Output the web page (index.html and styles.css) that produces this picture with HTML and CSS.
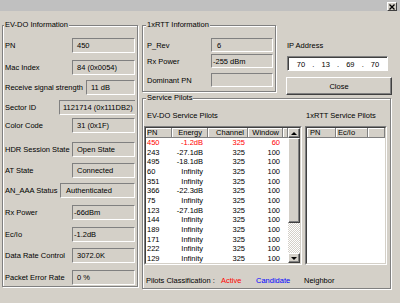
FILE: index.html
```html
<!DOCTYPE html>
<html>
  <head>
    <meta charset="UTF-8" />
    <meta name="viewport" content="width=device-width, initial-scale=1.0" />
    <link rel="stylesheet" href="styles.css">
  </head>
  <body>
    <div class="titlebar">
      <span class="close-x">
        <svg width="6" height="6" viewBox="0 0 6 6">
          <path d="M0.5 0.5L5.5 5.5M5.5 0.5L0.5 5.5" stroke="#000" stroke-width="1.3" />
        </svg>
      </span>
    </div>
    <div class="dialog">
      <div class="group evdo">
        <span class="group-title">EV-DO Information</span>
        <div class="rows">
          <div class="row"><span class="label">PN</span><span class="field">450</span></div>
          <div class="row"><span class="label">Mac Index</span><span class="field">84 (0x0054)</span></div>
          <div class="row"><span class="label">Receive signal strength</span><span class="field w-sig">11 dB</span></div>
          <div class="row"><span class="label">Sector ID</span><span class="field w-sector">1121714 (0x111DB2)</span></div>
          <div class="row"><span class="label">Color Code</span><span class="field">31 (0x1F)</span></div>
          <div class="row"><span class="label">HDR Session State</span><span class="field">Open State</span></div>
          <div class="row"><span class="label">AT State</span><span class="field">Connected</span></div>
          <div class="row"><span class="label">AN_AAA Status</span><span class="field w-aaa">Authenticated</span></div>
          <div class="row"><span class="label">Rx Power</span><span class="field tight">-66dBm</span></div>
          <div class="row"><span class="label">Ec/Io</span><span class="field tight">-1.2dB</span></div>
          <div class="row"><span class="label">Data Rate Control</span><span class="field">3072.0K</span></div>
          <div class="row"><span class="label">Packet Error Rate</span><span class="field">0 %</span></div>
        </div>
      </div>

      <div class="right-col">
        <div class="top-row">
          <div class="group rtt">
            <span class="group-title">1xRTT Information</span>
            <div class="rtt-rows">
              <div class="row short"><span class="label">P_Rev</span><span class="field w-rtt">6</span></div>
              <div class="row short"><span class="label">Rx Power</span><span class="field w-rtt tight">-255 dBm</span></div>
              <div class="row short"><span class="label">Dominant PN</span><span class="field w-rtt"></span></div>
            </div>
          </div>
          <div class="ip-box">
            <div class="ip-label">IP Address</div>
            <div class="ip-field">
              <span class="octet">70</span><span class="dot">.</span>
              <span class="octet">13</span><span class="dot">.</span>
              <span class="octet">69</span><span class="dot">.</span>
              <span class="octet">70</span>
            </div>
            <div class="close-btn">Close</div>
          </div>
        </div>

        <div class="group pilots">
          <span class="group-title">Service Pilots</span>
          <div class="pilot-cols">
            <div class="pilot-col evdo-col">
              <div class="col-label">EV-DO Service Pilots</div>
              <div class="list">
                <div class="list-inner">
                  <div class="lv">
                    <div class="lv-head">
                      <span class="c-pn">PN</span><span class="c-en">Energy</span><span class="c-ch">Channel</span><span class="c-win">Window</span><span class="c-fill"></span>
                    </div>
                    <div class="lv-row active"><span class="c-pn">450</span><span class="c-en">-1.2dB</span><span class="c-ch">325</span><span class="c-win">60</span></div>
                    <div class="lv-row"><span class="c-pn">243</span><span class="c-en">-27.1dB</span><span class="c-ch">325</span><span class="c-win">100</span></div>
                    <div class="lv-row"><span class="c-pn">495</span><span class="c-en">-18.1dB</span><span class="c-ch">325</span><span class="c-win">100</span></div>
                    <div class="lv-row"><span class="c-pn">60</span><span class="c-en">Infinity</span><span class="c-ch">325</span><span class="c-win">100</span></div>
                    <div class="lv-row"><span class="c-pn">351</span><span class="c-en">Infinity</span><span class="c-ch">325</span><span class="c-win">100</span></div>
                    <div class="lv-row"><span class="c-pn">366</span><span class="c-en">-22.3dB</span><span class="c-ch">325</span><span class="c-win">100</span></div>
                    <div class="lv-row"><span class="c-pn">75</span><span class="c-en">Infinity</span><span class="c-ch">325</span><span class="c-win">100</span></div>
                    <div class="lv-row"><span class="c-pn">123</span><span class="c-en">-27.1dB</span><span class="c-ch">325</span><span class="c-win">100</span></div>
                    <div class="lv-row"><span class="c-pn">144</span><span class="c-en">Infinity</span><span class="c-ch">325</span><span class="c-win">100</span></div>
                    <div class="lv-row"><span class="c-pn">189</span><span class="c-en">Infinity</span><span class="c-ch">325</span><span class="c-win">100</span></div>
                    <div class="lv-row"><span class="c-pn">171</span><span class="c-en">Infinity</span><span class="c-ch">325</span><span class="c-win">100</span></div>
                    <div class="lv-row"><span class="c-pn">222</span><span class="c-en">Infinity</span><span class="c-ch">325</span><span class="c-win">100</span></div>
                    <div class="lv-row"><span class="c-pn">129</span><span class="c-en">Infinity</span><span class="c-ch">325</span><span class="c-win">100</span></div>
                  </div>
                  <div class="scrollbar">
                    <div class="sb-btn"><span class="arrow-up"></span></div>
                    <div class="sb-thumb"></div>
                    <div class="sb-track"></div>
                    <div class="sb-btn"><span class="arrow-down"></span></div>
                  </div>
                </div>
              </div>
            </div>
            <div class="pilot-col rtt-col">
              <div class="col-label">1xRTT Service Pilots</div>
              <div class="list">
                <div class="list-inner">
                  <div class="lv">
                    <div class="lv-head">
                      <span class="c-pn2">PN</span><span class="c-ecio">Ec/Io</span><span class="c-fill"></span>
                    </div>
                  </div>
                </div>
              </div>
            </div>
          </div>
          <div class="legend-row">
            <span class="lg-label">Pilots Classification :</span>
            <span class="lg-active">Active</span>
            <span class="lg-cand">Candidate</span>
            <span>Neighbor</span>
          </div>
        </div>
      </div>
    </div>
  </body>
</html>
```

FILE: styles.css
```css
* {
  box-sizing: border-box;
}
body {
  margin: 0;
  width: 400px;
  height: 303px;
  overflow: hidden;
  background-color: #d4d0c8;
  font-family: "Liberation Sans", Arial, sans-serif;
  font-size: 7.5px;
  color: #000;
}

.titlebar {
  height: 11px;
  background-color: #c0c0c0;
  display: flex;
  justify-content: flex-end;
  padding: 2px 3px 0 0;
}
.close-x {
  width: 10px;
  height: 9px;
  background-color: #d4d0c8;
  border: 1px solid;
  border-color: #fff #404040 #404040 #fff;
  display: flex;
  align-items: center;
  justify-content: center;
}

.dialog {
  display: flex;
  gap: 4px;
  padding: 14px 0 0 2px;
}

/* etched group box */
.group {
  position: relative;
  border: 1px solid #808080;
  box-shadow: 1px 1px 0 #fff, inset 1px 1px 0 #fff;
}
.group-title {
  position: absolute;
  top: -6px;
  left: 1px;
  padding: 0 1px;
  line-height: 10px;
  background-color: #d4d0c8;
  white-space: nowrap;
}
.rtt .group-title,
.pilots .group-title {
  left: 3px;
}

.evdo {
  width: 136px;
  height: 262px;
  padding: 12px 2px 0 2px;
}
.rows {
  display: grid;
  grid-template-rows: 22px 20px 20px 18px 24px 21px 20px 22px 22px 21px 22px 15px;
}
.row {
  display: flex;
  align-items: center;
  height: 15px;
}
.row.short {
  height: 14px;
}
.label {
  flex: 1;
  min-width: 0;
  white-space: nowrap;
}
.field {
  width: 63px;
  height: 100%;
  border: 1px solid;
  border-color: #808080 #fff #fff #808080;
  padding-left: 4px;
  display: flex;
  align-items: center;
  white-space: nowrap;
  overflow: hidden;
}
.field.tight {
  padding-left: 1px;
}
.w-sig {
  width: 49px;
}
.w-sector {
  width: 76px;
  border-right: 0;
  padding-left: 3px;
}
.w-aaa {
  width: 75px;
  padding-left: 5px;
}
.w-rtt {
  width: 62px;
}

.right-col {
  width: 250px;
  display: flex;
  flex-direction: column;
}
.top-row {
  display: flex;
  gap: 10px;
  height: 67px;
}
.rtt {
  width: 134px;
  height: 67px;
  padding: 12px 2px 0 4px;
}
.rtt-rows {
  display: grid;
  grid-template-rows: 16px 19px 14px;
}
.rtt .w-rtt {
  padding-left: 5px;
}
.rtt .w-rtt.tight {
  padding-left: 1px;
}

.ip-box {
  width: 106px;
  padding-top: 16px;
}
.ip-label {
  line-height: 10px;
  padding-left: 1px;
}
.ip-field {
  margin: 5px 0 0 1px;
  width: 101px;
  height: 15px;
  background-color: #fff;
  border: 1px solid;
  border-color: #808080 #fff #fff #808080;
  box-shadow: inset 1px 1px 0 #404040;
  display: flex;
  align-items: center;
  padding: 1px 3px 0 4px;
}
.octet {
  width: 18px;
  text-align: center;
}
.dot {
  width: 6.7px;
  text-align: center;
}
.close-btn {
  margin-top: 6px;
  width: 106px;
  height: 18px;
  border: 1px solid;
  border-color: #fff #404040 #404040 #fff;
  box-shadow: inset -1px -1px 0 #808080;
  display: flex;
  align-items: center;
  justify-content: center;
}

.pilots {
  margin-top: 6px;
  width: 249px;
  height: 191px;
  padding: 12px 1px 0 1px;
}
.pilot-cols {
  display: flex;
  gap: 3px;
}
.col-label {
  line-height: 10px;
  margin-bottom: 5px;
  white-space: nowrap;
}
.evdo-col {
  width: 158px;
}
.evdo-col .col-label {
  padding-left: 3px;
}
.rtt-col {
  width: 82px;
}
.rtt-col .col-label {
  padding-left: 1px;
}

.list {
  height: 139px;
  border: 1px solid;
  border-color: #808080 #fff #fff #808080;
}
.list-inner {
  height: 100%;
  border: 1px solid;
  border-color: #404040 #d4d0c8 #d4d0c8 #404040;
  background-color: #fff;
  display: flex;
}
.lv {
  flex: 1;
  overflow: hidden;
}
.lv-head {
  display: flex;
  height: 10px;
  line-height: 9px;
  background-color: #d4d0c8;
}
.lv-head span {
  border-right: 1px solid #808080;
  border-bottom: 1px solid #808080;
  box-shadow: inset 1px 1px 0 #fff;
}
.lv-row {
  display: flex;
  height: 9.67px;
  line-height: 9.67px;
  white-space: nowrap;
}
.lv-row.active {
  color: #ff0000;
}
.c-pn {
  width: 26px;
  padding-left: 1px;
}
.c-en {
  width: 36px;
  text-align: right;
  padding-right: 5px;
}
.c-ch {
  width: 40px;
  text-align: right;
  padding-right: 3px;
}
.c-win {
  width: 35px;
  text-align: right;
  padding-right: 3px;
}
.c-fill {
  flex: 1;
}
.c-pn2 {
  width: 29px;
  padding-left: 3px;
}
.c-ecio {
  width: 32px;
  padding-left: 2px;
}

.scrollbar {
  width: 12px;
  display: flex;
  flex-direction: column;
}
.sb-btn,
.sb-thumb {
  background-color: #d4d0c8;
  border: 1px solid;
  border-color: #fff #404040 #404040 #fff;
  box-shadow: inset -1px -1px 0 #808080;
}
.sb-btn {
  height: 10px;
  display: flex;
  align-items: center;
  justify-content: center;
}
.sb-thumb {
  height: 85px;
}
.sb-track {
  flex: 1;
  background: repeating-conic-gradient(#fff 0 25%, #d4d0c8 0 50%) 0 0 / 2px 2px;
}
.arrow-up {
  border-left: 3px solid transparent;
  border-right: 3px solid transparent;
  border-bottom: 3px solid #000;
}
.arrow-down {
  border-left: 3px solid transparent;
  border-right: 3px solid transparent;
  border-top: 3px solid #000;
}

.legend-row {
  display: flex;
  margin-top: 11px;
  padding-left: 2px;
  line-height: 10px;
  white-space: nowrap;
}
.lg-label {
  width: 75px;
}
.lg-active {
  width: 35px;
  color: #ff0000;
}
.lg-cand {
  width: 48px;
  color: #0000ff;
}
```
